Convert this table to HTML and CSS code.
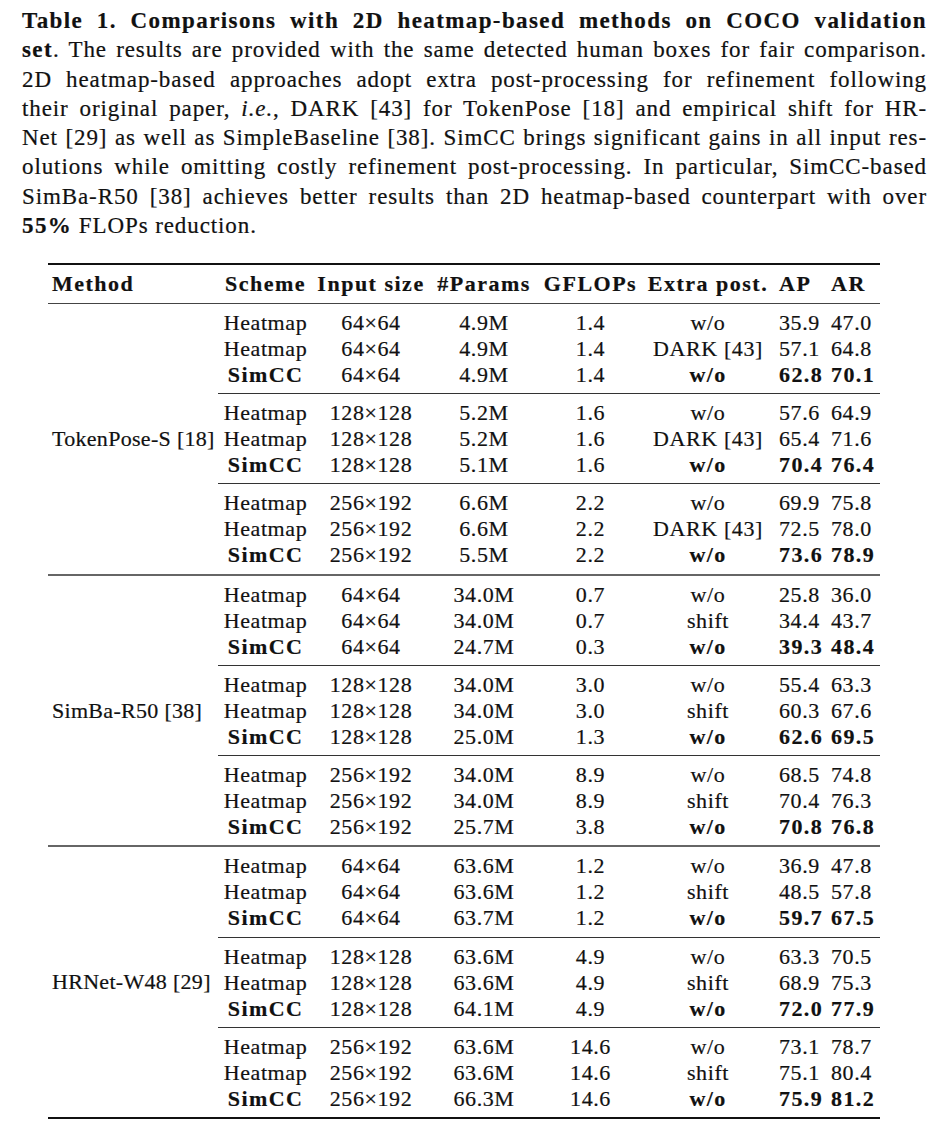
FILE: index.html
```html
<!DOCTYPE html>
<html>
<head>
<meta charset="utf-8">
<link rel="stylesheet" href="styles.css">
</head>
<body>
<div class="page">
  <div class="caption">
    <div class="ln"><b>Table 1. Comparisons with 2D heatmap-based methods on COCO validation</b></div>
    <div class="ln"><b>set</b>. The results are provided with the same detected human boxes for fair comparison.</div>
    <div class="ln">2D heatmap-based approaches adopt extra post-processing for refinement following</div>
    <div class="ln">their original paper, <i>i.e.</i>, DARK [43] for TokenPose [18] and empirical shift for HR-</div>
    <div class="ln">Net [29] as well as SimpleBaseline [38]. SimCC brings significant gains in all input res-</div>
    <div class="ln">olutions while omitting costly refinement post-processing. In particular, SimCC-based</div>
    <div class="ln">SimBa-R50 [38] achieves better results than 2D heatmap-based counterpart with over</div>
    <div class="ln last"><b>55%</b> FLOPs reduction.</div>
  </div>

  <div class="table">
    <div class="head">
      <div class="method-h">Method</div>
      <div class="c">Scheme</div>
      <div class="c">Input size</div>
      <div class="c">#Params</div>
      <div class="c">GFLOPs</div>
      <div class="c">Extra post.</div>
      <div class="l">AP</div>
      <div class="l">AR</div>
    </div>

    <div class="block">
      <div class="method">TokenPose-S [18]</div>
      <div class="groups">
        <div class="group">
          <div class="row"><span>Heatmap</span><span>64×64</span><span>4.9M</span><span>1.4</span><span>w/o</span><span class="l">35.9</span><span class="l">47.0</span></div>
          <div class="row"><span>Heatmap</span><span>64×64</span><span>4.9M</span><span>1.4</span><span>DARK [43]</span><span class="l">57.1</span><span class="l">64.8</span></div>
          <div class="row"><b>SimCC</b><span>64×64</span><span>4.9M</span><span>1.4</span><b>w/o</b><b class="l">62.8</b><b class="l">70.1</b></div>
        </div>
        <div class="group">
          <div class="row"><span>Heatmap</span><span>128×128</span><span>5.2M</span><span>1.6</span><span>w/o</span><span class="l">57.6</span><span class="l">64.9</span></div>
          <div class="row"><span>Heatmap</span><span>128×128</span><span>5.2M</span><span>1.6</span><span>DARK [43]</span><span class="l">65.4</span><span class="l">71.6</span></div>
          <div class="row"><b>SimCC</b><span>128×128</span><span>5.1M</span><span>1.6</span><b>w/o</b><b class="l">70.4</b><b class="l">76.4</b></div>
        </div>
        <div class="group">
          <div class="row"><span>Heatmap</span><span>256×192</span><span>6.6M</span><span>2.2</span><span>w/o</span><span class="l">69.9</span><span class="l">75.8</span></div>
          <div class="row"><span>Heatmap</span><span>256×192</span><span>6.6M</span><span>2.2</span><span>DARK [43]</span><span class="l">72.5</span><span class="l">78.0</span></div>
          <div class="row"><b>SimCC</b><span>256×192</span><span>5.5M</span><span>2.2</span><b>w/o</b><b class="l">73.6</b><b class="l">78.9</b></div>
        </div>
      </div>
    </div>

    <div class="block">
      <div class="method">SimBa-R50 [38]</div>
      <div class="groups">
        <div class="group">
          <div class="row"><span>Heatmap</span><span>64×64</span><span>34.0M</span><span>0.7</span><span>w/o</span><span class="l">25.8</span><span class="l">36.0</span></div>
          <div class="row"><span>Heatmap</span><span>64×64</span><span>34.0M</span><span>0.7</span><span>shift</span><span class="l">34.4</span><span class="l">43.7</span></div>
          <div class="row"><b>SimCC</b><span>64×64</span><span>24.7M</span><span>0.3</span><b>w/o</b><b class="l">39.3</b><b class="l">48.4</b></div>
        </div>
        <div class="group">
          <div class="row"><span>Heatmap</span><span>128×128</span><span>34.0M</span><span>3.0</span><span>w/o</span><span class="l">55.4</span><span class="l">63.3</span></div>
          <div class="row"><span>Heatmap</span><span>128×128</span><span>34.0M</span><span>3.0</span><span>shift</span><span class="l">60.3</span><span class="l">67.6</span></div>
          <div class="row"><b>SimCC</b><span>128×128</span><span>25.0M</span><span>1.3</span><b>w/o</b><b class="l">62.6</b><b class="l">69.5</b></div>
        </div>
        <div class="group">
          <div class="row"><span>Heatmap</span><span>256×192</span><span>34.0M</span><span>8.9</span><span>w/o</span><span class="l">68.5</span><span class="l">74.8</span></div>
          <div class="row"><span>Heatmap</span><span>256×192</span><span>34.0M</span><span>8.9</span><span>shift</span><span class="l">70.4</span><span class="l">76.3</span></div>
          <div class="row"><b>SimCC</b><span>256×192</span><span>25.7M</span><span>3.8</span><b>w/o</b><b class="l">70.8</b><b class="l">76.8</b></div>
        </div>
      </div>
    </div>

    <div class="block">
      <div class="method">HRNet-W48 [29]</div>
      <div class="groups">
        <div class="group">
          <div class="row"><span>Heatmap</span><span>64×64</span><span>63.6M</span><span>1.2</span><span>w/o</span><span class="l">36.9</span><span class="l">47.8</span></div>
          <div class="row"><span>Heatmap</span><span>64×64</span><span>63.6M</span><span>1.2</span><span>shift</span><span class="l">48.5</span><span class="l">57.8</span></div>
          <div class="row"><b>SimCC</b><span>64×64</span><span>63.7M</span><span>1.2</span><b>w/o</b><b class="l">59.7</b><b class="l">67.5</b></div>
        </div>
        <div class="group">
          <div class="row"><span>Heatmap</span><span>128×128</span><span>63.6M</span><span>4.9</span><span>w/o</span><span class="l">63.3</span><span class="l">70.5</span></div>
          <div class="row"><span>Heatmap</span><span>128×128</span><span>63.6M</span><span>4.9</span><span>shift</span><span class="l">68.9</span><span class="l">75.3</span></div>
          <div class="row"><b>SimCC</b><span>128×128</span><span>64.1M</span><span>4.9</span><b>w/o</b><b class="l">72.0</b><b class="l">77.9</b></div>
        </div>
        <div class="group">
          <div class="row"><span>Heatmap</span><span>256×192</span><span>63.6M</span><span>14.6</span><span>w/o</span><span class="l">73.1</span><span class="l">78.7</span></div>
          <div class="row"><span>Heatmap</span><span>256×192</span><span>63.6M</span><span>14.6</span><span>shift</span><span class="l">75.1</span><span class="l">80.4</span></div>
          <div class="row"><b>SimCC</b><span>256×192</span><span>66.3M</span><span>14.6</span><b>w/o</b><b class="l">75.9</b><b class="l">81.2</b></div>
        </div>
      </div>
    </div>
  </div>
</div>
</body>
</html>
```

FILE: styles.css
```css
html, body {
  margin: 0;
  padding: 0;
  background: #ffffff;
}

body {
  color: #111111;
  font-family: "Liberation Serif", "Times New Roman", serif;
  -webkit-text-stroke: 0.2px #111111;
}

.page {
  padding: 6px 0 0 22px;
}

.caption {
  width: 905px;
  font-size: 23px;
  line-height: 29.3px;
  letter-spacing: 0.9px;
}

.caption b {
  letter-spacing: 1.4px;
}

.caption .ln {
  text-align: justify;
  text-align-last: justify;
  white-space: nowrap;
}

.caption .ln.last {
  text-align-last: left;
}

.table {
  margin: 22.6px 0 0 26px;
  width: 832px;
  border-top: 2px solid #111;
  border-bottom: 2px solid #111;
  font-size: 22px;
  line-height: 26px;
  letter-spacing: 0.6px;
}

.table b {
  letter-spacing: 1.4px;
}

.head {
  display: grid;
  grid-template-columns: 170px 95px 116px 110px 103px 132px 53px 53px;
  padding: 6px 0;
  border-bottom: 1px solid #444;
  font-weight: bold;
  letter-spacing: 1.5px;
  white-space: nowrap;
}

.method-h {
  padding-left: 4px;
}

.c {
  text-align: center;
}

.l {
  text-align: left;
  padding-left: 5px;
}

.head .l:last-child,
.row .l:last-child {
  padding-left: 4px;
}

.block {
  display: flex;
}

.block + .block {
  border-top: 2px solid #666;
}

.method {
  width: 170px;
  flex: none;
  padding-left: 4px;
  box-sizing: border-box;
  display: flex;
  align-items: center;
  white-space: nowrap;
  letter-spacing: 0.3px;
}

.groups {
  flex: 1;
}

.group {
  padding: 6px 0 5.25px 0;
}

.group + .group {
  border-top: 1px solid #333;
}

.row {
  display: grid;
  grid-template-columns: 95px 116px 110px 103px 132px 53px 53px;
  text-align: center;
  white-space: nowrap;
}

.row .l {
  text-align: left;
}
```
